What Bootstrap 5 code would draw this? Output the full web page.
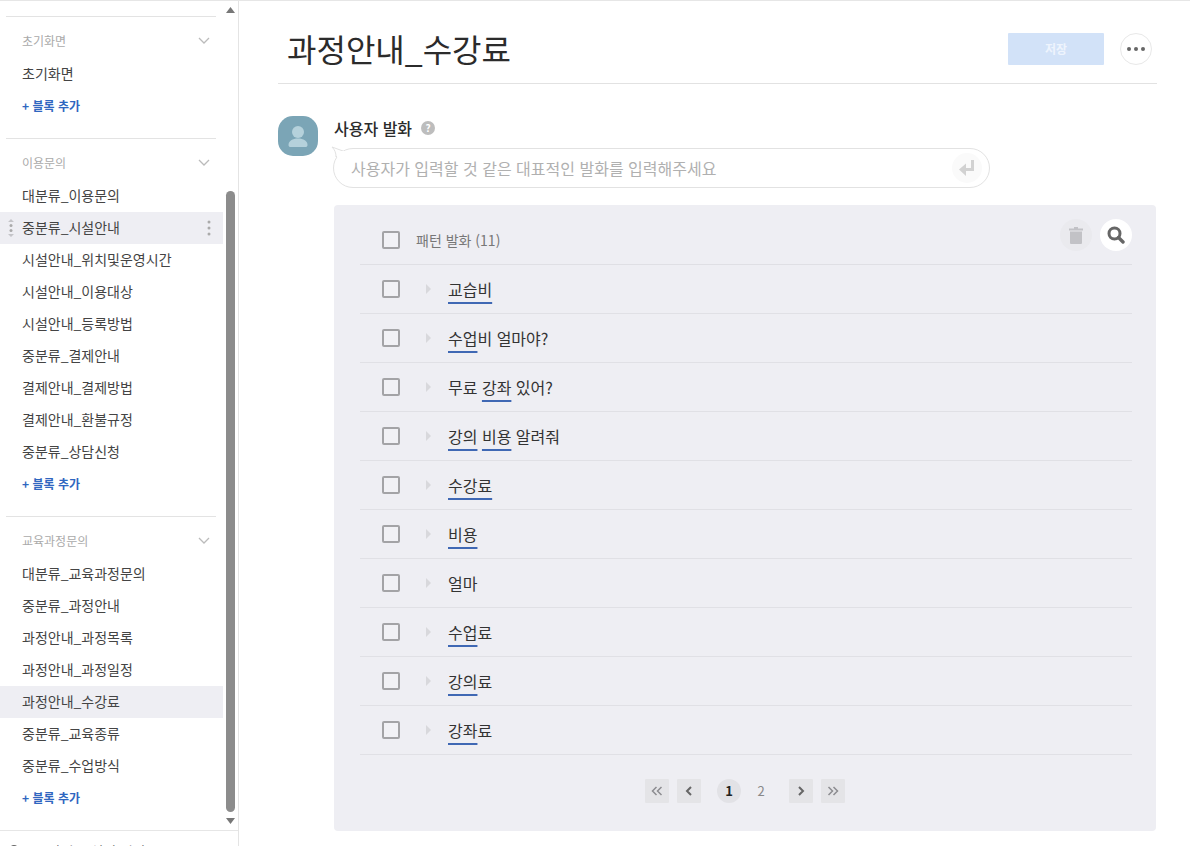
<!DOCTYPE html>
<html lang="ko">
  <head>
    <meta charset="UTF-8" />
    <title>과정안내_수강료</title>
    <link
      href="https://cdn.jsdelivr.net/npm/bootstrap@5.3.6/dist/css/bootstrap.min.css"
      rel="stylesheet"
    />
    <style>
      body {
        height: 846px;
        overflow: hidden;
        font-family: "Noto Sans CJK KR", "Noto Sans", sans-serif;
        color: #333;
        border-top: 1px solid #e6e6e6;
      }

      /* sidebar */
      .side-wrap {
        width: 239px;
        height: 845px;
        border-right: 1px solid #e4e4e4;
        flex-shrink: 0;
      }
      .side-body {
        height: 829px;
      }
      .side-list {
        width: 223px;
        padding-top: 15px;
      }
      .side-group {
        padding-bottom: 18px;
      }
      .side-head {
        height: 42px;
        margin: 0 7px 0 6px;
        padding: 6px 6px 0 16px;
        border-top: 1px solid #e3e3e3;
        font-size: 12px;
        color: #aaa;
      }
      .side-item {
        height: 32px;
        padding-left: 22px;
        padding-bottom: 2px;
        font-size: 14px;
        color: #444;
      }
      .side-item.active-row {
        background: #eeeef3;
      }
      .side-add {
        height: 30px;
        padding-left: 22px;
        padding-top: 1px;
        font-size: 12px;
        font-weight: 700;
        color: #2f66c0;
      }
      .drag-handle {
        left: 7px;
        top: 7px;
      }
      .more-handle {
        right: 12px;
        top: 8px;
      }
      .scroll-col {
        width: 15px;
        padding-top: 6px;
      }
      .scroll-thumb {
        width: 9px;
        height: 621px;
        margin-top: 178px;
        margin-bottom: 6px;
        margin-left: 3px;
        border-radius: 5px;
        background: #8c8c8c;
      }
      .scroll-arrow {
        display: block;
        margin-left: 3px;
      }
      .side-foot {
        height: 16px;
        border-top: 1px solid #e6e6e6;
        padding: 13px 0 0 8px;
        font-size: 14px;
        line-height: 14px;
        color: #555;
        overflow: hidden;
      }
      .side-foot svg {
        margin-right: 15px;
        flex-shrink: 0;
      }

      /* main */
      .main-wrap {
        padding: 0 33px 0 39px;
      }
      .page-head {
        height: 83px;
        border-bottom: 1px solid #e2e2e2;
        padding: 14px 5px 0 9px;
      }
      .page-title {
        font-size: 32px;
        font-weight: 400;
        color: #2b2b2b;
        margin: 0;
        padding-bottom: 1px;
      }
      .save-btn {
        width: 96px;
        height: 32px;
        padding: 0;
        border: 0;
        border-radius: 1px;
        background: #d2e2f8;
        color: #eef4fd;
        font-size: 12px;
        font-weight: 700;
      }
      .more-btn {
        width: 32px;
        height: 32px;
        padding: 0;
        margin-left: 16px;
        border: 1px solid #e8e8e8;
        border-radius: 50%;
        background: #fff;
      }
      .avatar-box {
        width: 40px;
        height: 40px;
        border-radius: 15px;
        background: #7ba5b6;
        flex-shrink: 0;
      }
      .talk-col {
        margin-left: 16px;
        width: 822px;
      }
      .talk-label {
        font-size: 16px;
        font-weight: 500;
        line-height: 24px;
        color: #2b2b2b;
      }
      .help-dot {
        width: 14px;
        height: 14px;
        margin-left: 9px;
        border-radius: 50%;
        background: #bdbdbd;
        color: #fff;
        font-size: 10px;
        font-weight: 700;
        line-height: 14px;
        text-align: center;
      }
      .talk-input-box {
        width: 657px;
        margin-top: 8px;
        margin-left: -1px;
      }
      .talk-input {
        height: 40px;
        border: 1px solid #e2e2e2;
        border-radius: 20px;
        padding: 0 50px 0 17px;
        font-size: 16px;
        background: #fff;
      }
      .talk-input::placeholder {
        color: #b0b0b0;
      }
      .talk-tail {
        left: -2px;
        top: -2px;
      }
      .enter-ico {
        right: 8px;
        top: 5px;
        width: 30px;
        height: 30px;
        border-radius: 50%;
        background: #fafafa;
      }
      .pattern-panel {
        margin-top: 17px;
        height: 626px;
        background: #eeeef3;
        border-radius: 4px;
        padding: 11px 24px 0 26px;
      }
      .pattern-head {
        height: 49px;
        border-bottom: 1px solid #dfdfe4;
        padding-left: 22px;
      }
      .pattern-row {
        height: 49px;
        border-bottom: 1px solid #e0e0e5;
        padding-left: 22px;
        font-size: 16px;
        color: #333;
      }
      input.pattern-check[type="checkbox"] {
        width: 18px;
        height: 18px;
        margin: 0;
        flex-shrink: 0;
        border: 2px solid #a3a3a6;
        border-radius: 2px;
        background-color: #f1f1f5;
      }
      .pattern-title {
        margin-left: 16px;
        font-size: 14px;
        color: #777;
      }
      .row-arrow {
        margin: 0 17px 0 26px;
        width: 0;
        height: 0;
        border-left: 5px solid #d8d8dc;
        border-top: 5px solid transparent;
        border-bottom: 5px solid transparent;
      }
      .entity-word {
        text-decoration: underline;
        text-decoration-color: #3f68b4;
        text-decoration-thickness: 2px;
        text-underline-offset: 6px;
        text-decoration-skip-ink: none;
      }
      .head-tools {
        margin-bottom: 10px;
      }
      .round-ico {
        width: 32px;
        height: 32px;
        padding: 0;
        border: 0;
        border-radius: 50%;
      }
      .trash-ico {
        background: #eaeaee;
        margin-right: 8px;
      }
      .search-ico {
        background: #fff;
      }
      .pager-box {
        margin-top: 24px;
        margin-left: -2px;
      }
      .pager-btn {
        width: 24px;
        height: 24px;
        padding: 0;
        border: 0;
        border-radius: 1px;
        background: #e4e4e7;
      }
      .pager-num {
        width: 24px;
        height: 24px;
        padding: 0;
        border: 0;
        border-radius: 50%;
        background: transparent;
        color: #888;
        font-size: 13px;
      }
      .pager-num.current-num {
        background: #e2e2e6;
        color: #222;
        font-weight: 700;
        margin-left: 16px;
      }
      .pager-next {
        margin-left: 16px;
      }
    </style>
  </head>

  <body>
    <div class="d-flex">
      <aside class="side-wrap d-flex flex-column">
        <div class="side-body d-flex">
          <div class="side-list" id="sideList"></div>
          <div class="scroll-col">
            <svg class="scroll-arrow" width="9" height="6" viewBox="0 0 9 6"><path d="M4.5 0 9 6H0z" fill="#777" /></svg>
            <div class="scroll-thumb"></div>
            <svg class="scroll-arrow" width="9" height="6" viewBox="0 0 9 6"><path d="M0 0h9L4.5 6z" fill="#777" /></svg>
          </div>
        </div>
        <div class="side-foot d-flex align-items-start">
          <svg width="12" height="12" viewBox="0 0 12 12"><circle cx="6" cy="6" r="5" fill="#666" /></svg>
          <span>시나리오 설정 저장</span>
        </div>
      </aside>

      <main class="main-wrap flex-grow-1">
        <div class="page-head d-flex align-items-center justify-content-between">
          <h1 class="page-title">과정안내_수강료</h1>
          <div class="d-flex align-items-center">
            <button type="button" class="btn save-btn">저장</button>
            <button type="button" class="btn more-btn d-flex align-items-center justify-content-center">
              <svg width="18" height="4" viewBox="0 0 18 4"><circle cx="2" cy="2" r="2" fill="#666" /><circle cx="9" cy="2" r="2" fill="#666" /><circle cx="16" cy="2" r="2" fill="#666" /></svg>
            </button>
          </div>
        </div>

        <div class="d-flex mt-4 pt-2">
          <div class="avatar-box d-flex align-items-center justify-content-center">
            <svg width="20" height="21" viewBox="0 0 20 21"><circle cx="10" cy="6" r="6" fill="#b5d1db" /><path d="M.5 19c0-4 4-6.500 9.500-6.500s9.500 2.500 9.500 6.500c0 1.500-1 2-2 2h-15c-1 0-2-.5-2-2z" fill="#b5d1db" /></svg>
          </div>
          <div class="talk-col">
            <div class="d-flex align-items-center">
              <span class="talk-label">사용자 발화</span>
              <span class="help-dot">?</span>
            </div>
            <div class="talk-input-box position-relative">
              <input type="text" class="form-control talk-input shadow-none" placeholder="사용자가 입력할 것 같은 대표적인 발화를 입력해주세요" />
              <svg class="talk-tail position-absolute" width="14" height="12" viewBox="0 0 14 12"><path d="M1 1 12 5 5 11C5 7 4 4 1 1z" fill="#fff" stroke="#e2e2e2" /><path d="M6 5h8v6H6z" fill="#fff" /></svg>
              <div class="enter-ico position-absolute d-flex align-items-center justify-content-center">
                <svg width="16" height="16" viewBox="0 0 16 16"><path d="M12 0h3v11H7v5L0 9.500 7 3.500V8h5z" fill="#d2d2d2" /></svg>
              </div>
            </div>

            <div class="pattern-panel">
              <div class="pattern-head d-flex align-items-center">
                <input type="checkbox" class="form-check-input pattern-check" aria-label="전체 선택" />
                <span class="pattern-title">패턴 발화 (11)</span>
                <div class="ms-auto d-flex head-tools">
                  <button type="button" class="btn round-ico trash-ico d-flex align-items-center justify-content-center">
                    <svg width="14" height="17" viewBox="0 0 14 17"><path d="M5 0h4v1.500h5v2H0v-2h5zM1 4.500h12V16a1 1 0 0 1-1 1H2a1 1 0 0 1-1-1z" fill="#c2c2c6" /></svg>
                  </button>
                  <button type="button" class="btn round-ico search-ico d-flex align-items-center justify-content-center">
                    <svg width="18" height="18" viewBox="0 0 18 18"><circle cx="7.500" cy="7.500" r="5.500" fill="none" stroke="#666" stroke-width="3" /><path d="M11.500 11.500 16 16" stroke="#666" stroke-width="3.400" stroke-linecap="round" /></svg>
                  </button>
                </div>
              </div>
              <div id="patternRows"></div>
              <div class="pager-box d-flex align-items-center justify-content-center">
                <button type="button" class="btn pager-btn d-flex align-items-center justify-content-center" aria-label="처음">
                  <svg width="12" height="10" viewBox="0 0 12 10"><path d="M5.500 1 1.500 5l4 4M10.500 1l-4 4 4 4" fill="none" stroke="#8c8c90" stroke-width="1.500" /></svg>
                </button>
                <button type="button" class="btn pager-btn ms-2 d-flex align-items-center justify-content-center" aria-label="이전">
                  <svg width="8" height="10" viewBox="0 0 8 10"><path d="M6 1 2 5l4 4" fill="none" stroke="#666" stroke-width="2" /></svg>
                </button>
                <button type="button" class="btn pager-num current-num">1</button>
                <button type="button" class="btn pager-num ms-2">2</button>
                <button type="button" class="btn pager-btn pager-next d-flex align-items-center justify-content-center" aria-label="다음">
                  <svg width="8" height="10" viewBox="0 0 8 10"><path d="M2 1l4 4-4 4" fill="none" stroke="#666" stroke-width="2" /></svg>
                </button>
                <button type="button" class="btn pager-btn ms-2 d-flex align-items-center justify-content-center" aria-label="마지막">
                  <svg width="12" height="10" viewBox="0 0 12 10"><path d="M1.500 1l4 4-4 4M6.500 1l4 4-4 4" fill="none" stroke="#8c8c90" stroke-width="1.500" /></svg>
                </button>
              </div>
            </div>
          </div>
        </div>
      </main>
    </div>

    <script src="https://cdn.jsdelivr.net/npm/bootstrap@5.3.6/dist/js/bootstrap.bundle.min.js"></script>
    <script>
      const sideGroups = [
        { name: '초기화면', items: ['초기화면'] },
        {
          name: '이용문의',
          items: ['대분류_이용문의', '중분류_시설안내', '시설안내_위치및운영시간', '시설안내_이용대상', '시설안내_등록방법', '중분류_결제안내', '결제안내_결제방법', '결제안내_환불규정', '중분류_상담신청'],
        },
        {
          name: '교육과정문의',
          items: ['대분류_교육과정문의', '중분류_과정안내', '과정안내_과정목록', '과정안내_과정일정', '과정안내_수강료', '중분류_교육종류', '중분류_수업방식'],
        },
      ];
      const hoverItem = '중분류_시설안내';
      const currentItem = '과정안내_수강료';

      const chevron = '<svg width="12" height="7" viewBox="0 0 12 7"><path d="M1 1l5 5 5-5" fill="none" stroke="#bbb" stroke-width="1.300" /></svg>';
      const dragIcon = '<svg class="drag-handle position-absolute" width="8" height="18" viewBox="0 0 8 18"><path d="M4 0l3 3H1zM4 18l-3-3h6z" fill="#c4c4c8" /><circle cx="4" cy="6.500" r="1.500" fill="#aaa" /><circle cx="4" cy="11.500" r="1.500" fill="#aaa" /></svg>';
      const moreIcon = '<svg class="more-handle position-absolute" width="4" height="16" viewBox="0 0 4 16"><circle cx="2" cy="2" r="1.500" fill="#aaa" /><circle cx="2" cy="8" r="1.500" fill="#aaa" /><circle cx="2" cy="14" r="1.500" fill="#aaa" /></svg>';

      document.getElementById('sideList').innerHTML = sideGroups
        .map((group) => {
          const rows = group.items
            .map((item) => {
              const active = item === hoverItem || item === currentItem;
              const extra = item === hoverItem ? dragIcon + moreIcon : '';
              return `<div class="side-item d-flex align-items-center position-relative ${active ? 'active-row' : ''}">${extra}${item}</div>`;
            })
            .join('');
          return `<div class="side-group">
            <div class="side-head d-flex align-items-center justify-content-between"><span>${group.name}</span>${chevron}</div>
            ${rows}
            <div class="side-add d-flex align-items-center">+ 블록 추가</div>
          </div>`;
        })
        .join('');

      // words wrapped in [] get the blue entity underline
      const patterns = ['[교습비]', '[수업]비 얼마야?', '무료 [강좌] 있어?', '[강의] [비용] 알려줘', '[수강료]', '[비용]', '얼마', '[수업]료', '[강의]료', '[강좌]료'];

      document.getElementById('patternRows').innerHTML = patterns
        .map((text) => {
          const html = text.replace(/\[(.+?)\]/g, '<span class="entity-word">$1</span>');
          return `<div class="pattern-row d-flex align-items-center">
            <input type="checkbox" class="form-check-input pattern-check" aria-label="선택" />
            <span class="row-arrow"></span>
            <span>${html}</span>
          </div>`;
        })
        .join('');
    </script>
  </body>
</html>
